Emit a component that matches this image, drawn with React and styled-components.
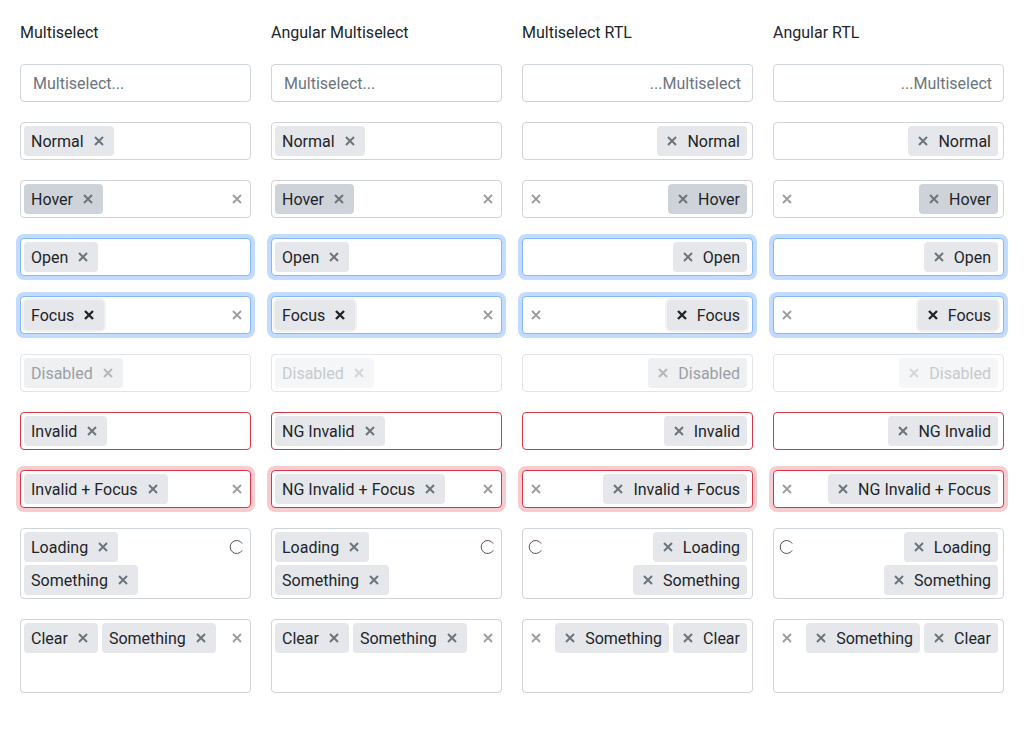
import React from "react";
import styled, { createGlobalStyle, css } from "styled-components";

const GlobalStyle = createGlobalStyle`
  body {
    margin: 0;
    background: #fff;
    font-family: Roboto, "Liberation Sans", Arial, sans-serif;
    color: #212529;
  }
`;

const Page = styled.div`
  padding: 20px;
  display: grid;
  grid-template-columns: repeat(4, 231px);
  column-gap: 20px;
`;

const Column = styled.div`
  display: flex;
  flex-direction: column;
  gap: 20px;
`;

const Heading = styled.div`
  font-size: 16px;
  line-height: 24px;
  height: 24px;
  padding-top: 1px;
  box-sizing: border-box;
`;

const Box = styled.div`
  display: flex;
  align-items: flex-start;
  box-sizing: border-box;
  min-height: 38px;
  padding: 3px;
  border: 1px solid ${props => props.invalid ? "#dc3545" : props.focus ? "#86b7fe" : props.disabled ? "#e1e4e8" : "#ced4da"};
  border-radius: 4px;
  background: #fff;
  direction: ${props => (props.rtl ? "rtl" : "ltr")};
  box-shadow: ${props => {
    if (props.focus && props.invalid) return "0 0 0 4px rgba(220, 53, 69, 0.25)";
    if (props.focus) return "0 0 0 4px rgba(13, 110, 253, 0.25)";
    return "none";
  }};
`;

const Values = styled.div`
  flex: 1;
  display: flex;
  flex-wrap: wrap;
  gap: 3px 4px;
  min-width: 0;
  padding-inline-start: ${props => (props.rtl ? "2px" : "0")};
`;

const Tag = styled.div`
  display: flex;
  align-items: center;
  box-sizing: border-box;
  height: 30px;
  padding: 1px 0 0;
  padding-inline: 7px 10px;
  border-radius: 4px;
  font-size: 16px;
  line-height: 29px;
  white-space: nowrap;
  ${props => {
    switch (props.variant) {
      case "hover":
        return css`
          background: #ced3da;
          color: #212529;
        `;
      case "focus":
        return css`
          background: #e5e7eb;
          color: #212529;
          box-shadow: 0 0 0 2px #f1f2f4;
        `;
      case "disabled":
        return css`
          background: #eff0f2;
          color: #9aa0a6;
        `;
      case "ngDisabled":
        return css`
          background: #f5f6f7;
          color: #c6cacf;
        `;
      default:
        return css`
          background: #e5e7eb;
          color: #212529;
        `;
    }
  }}
`;

const TagRemove = styled.span`
  display: flex;
  margin-inline-start: 10px;
  margin-top: -1px;
  color: ${props => props.color};
`;

const Input = styled.div`
  flex: 1;
  min-width: ${props => props.minWidth}px;
  height: ${props => props.height}px;
  line-height: 30px;
  padding: 1px 9px 0;
  padding-inline-start: ${props => (props.rtl ? "6px" : "9px")};
  box-sizing: border-box;
  font-size: 16px;
  color: #6c757d;
  white-space: nowrap;
`;

const Indicator = styled.div`
  flex-shrink: 0;
  width: 20px;
  height: 30px;
  display: flex;
  align-items: center;
  justify-content: center;
  color: #9a9da1;
`;

const Cross = ({ size = 10, weight = 2 }) => (
  <svg width={size} height={size} viewBox="0 0 10 10">
    <path
      d="M1 1 L9 9 M9 1 L1 9"
      stroke="currentColor"
      strokeWidth={weight}
      strokeLinecap="butt"
    />
  </svg>
);

const Spinner = () => (
  <svg width="16" height="16" viewBox="0 0 16 16">
    <path
      d="M13.2 4.6 A6.5 6.5 0 1 0 13.2 11.4"
      fill="none"
      stroke="#555"
      strokeWidth="1"
    />
  </svg>
);

const columns = [
  { title: "Multiselect", rtl: false, angular: false },
  { title: "Angular Multiselect", rtl: false, angular: true },
  { title: "Multiselect RTL", rtl: true, angular: false },
  { title: "Angular RTL", rtl: true, angular: true }
];

const rows = [
  { key: "placeholder", tags: [], placeholder: true },
  { key: "normal", tags: ["Normal"] },
  { key: "hover", tags: ["Hover"], tagVariant: "hover", clear: true },
  { key: "open", tags: ["Open"], focus: true },
  { key: "focus", tags: ["Focus"], tagVariant: "focus", focus: true, clear: true },
  { key: "disabled", tags: ["Disabled"], disabled: true },
  { key: "invalid", tags: ["Invalid"], invalid: true },
  { key: "invalidFocus", tags: ["Invalid + Focus"], invalid: true, focus: true, clear: true },
  { key: "loading", tags: ["Loading", "Something"], loading: true },
  { key: "clear", tags: ["Clear", "Something"], clear: true, inputMin: 40, inputHeight: 33 }
];

function tagLabel(label, col) {
  if (col.angular && label.startsWith("Invalid")) return "NG " + label;
  return label;
}

function removeColor(row) {
  if (row.tagVariant === "focus") return "#212529";
  if (row.disabled) return "#b4b8bd";
  return "#6c757d";
}

const Select = ({ row, col }) => {
  let variant = row.tagVariant || "normal";
  if (row.disabled) variant = col.angular ? "ngDisabled" : "disabled";
  const xColor = row.disabled && col.angular ? "#d3d6da" : removeColor(row);

  return (
    <Box rtl={col.rtl} focus={row.focus} invalid={row.invalid} disabled={row.disabled}>
      <Values rtl={col.rtl}>
        {row.tags.map((t, i) => (
          <Tag key={i} variant={variant}>
            {tagLabel(t, col)}
            <TagRemove color={xColor}>
              <Cross size={10} weight={row.tagVariant === "focus" ? 2.4 : 2} />
            </TagRemove>
          </Tag>
        ))}
        <Input rtl={col.rtl} minWidth={row.inputMin || 2} height={row.inputHeight || 30}>
          {row.placeholder ? "Multiselect..." : ""}
        </Input>
      </Values>
      {row.clear && (
        <Indicator>
          <Cross size={10} weight={1.8} />
        </Indicator>
      )}
      {row.loading && (
        <Indicator>
          <Spinner />
        </Indicator>
      )}
    </Box>
  );
};

const App = () => {
  return (
    <>
      <GlobalStyle />
      <Page>
        {columns.map(col => (
          <Column key={col.title}>
            <Heading>{col.title}</Heading>
            {rows.map(row => (
              <Select key={row.key} row={row} col={col} />
            ))}
          </Column>
        ))}
      </Page>
    </>
  );
};

export default App;
